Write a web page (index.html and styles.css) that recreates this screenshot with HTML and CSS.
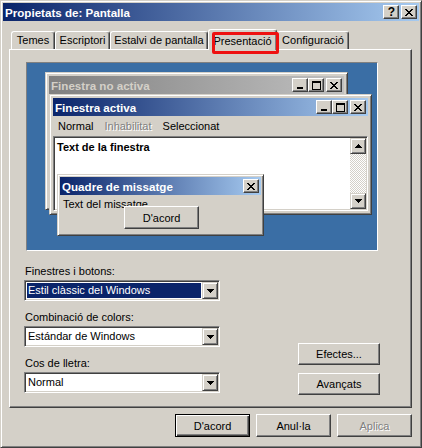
FILE: index.html
```
<!DOCTYPE html>
<html lang="ca">
<head>
<meta charset="utf-8">
<title>Propietats de: Pantalla</title>
<link rel="stylesheet" href="styles.css">
</head>
<body>
<div class="window">
  <div class="titlebar">
    <span class="title">Propietats de: Pantalla</span>
    <div class="caption-btns">
      <div class="cbtn help">?</div>
      <div class="cbtn">
        <svg width="8" height="7" viewBox="0 0 8 7"><path d="M0 0h2v1H0zM6 0h2v1H6zM1 1h2v1H1zM5 1h2v1H5zM2 2h4v1H2zM3 3h2v1H3zM2 4h4v1H2zM1 5h2v1H1zM5 5h2v1H5zM0 6h2v1H0zM6 6h2v1H6z" fill="#000"/></svg>
      </div>
    </div>
  </div>

  <div class="client">
    <div class="tabs">
      <div class="tab w-temes">Temes</div>
      <div class="tab w-escr">Escriptori</div>
      <div class="tab w-estalvi">Estalvi de pantalla</div>
      <div class="tab tab-sel w-pres">Presentació</div>
      <div class="tab w-conf">Configuració</div>
    </div>

    <div class="panel">
      <div class="preview">
        <div class="mwin win-inactive">
          <div class="mtitle inactive">
            <span>Finestra no activa</span>
            <div class="mcaps">
              <div class="cbtn"><svg width="8" height="7" viewBox="0 0 8 7"><path d="M1 5h6v2H1z" fill="#000"/></svg></div>
              <div class="cbtn"><svg width="9" height="9" viewBox="0 0 9 9"><path d="M0 0h9v9H0zM1 2v6h7V2z" fill="#000" fill-rule="evenodd"/></svg></div>
              <div class="cbtn gap"><svg width="8" height="7" viewBox="0 0 8 7"><path d="M0 0h2v1H0zM6 0h2v1H6zM1 1h2v1H1zM5 1h2v1H5zM2 2h4v1H2zM3 3h2v1H3zM2 4h4v1H2zM1 5h2v1H1zM5 5h2v1H5zM0 6h2v1H0zM6 6h2v1H6z" fill="#000"/></svg></div>
            </div>
          </div>
        </div>

        <div class="mwin win-active">
          <div class="mtitle active">
            <span>Finestra activa</span>
            <div class="mcaps">
              <div class="cbtn"><svg width="8" height="7" viewBox="0 0 8 7"><path d="M1 5h6v2H1z" fill="#000"/></svg></div>
              <div class="cbtn"><svg width="9" height="9" viewBox="0 0 9 9"><path d="M0 0h9v9H0zM1 2v6h7V2z" fill="#000" fill-rule="evenodd"/></svg></div>
              <div class="cbtn gap"><svg width="8" height="7" viewBox="0 0 8 7"><path d="M0 0h2v1H0zM6 0h2v1H6zM1 1h2v1H1zM5 1h2v1H5zM2 2h4v1H2zM3 3h2v1H3zM2 4h4v1H2zM1 5h2v1H1zM5 5h2v1H5zM0 6h2v1H0zM6 6h2v1H6z" fill="#000"/></svg></div>
            </div>
          </div>
          <div class="menu">
            <span class="mi">Normal</span>
            <span class="mi disabled">Inhabilitat</span>
            <span class="mi">Seleccionat</span>
          </div>
          <div class="textarea">
            <div class="ta-text">Text de la finestra</div>
            <div class="scrollbar">
              <div class="sbtn"><svg width="7" height="4" viewBox="0 0 7 4"><path d="M3 0h1v1H3zM2 1h3v1H2zM1 2h5v1H1zM0 3h7v1H0z" fill="#000"/></svg></div>
              <div class="track"></div>
              <div class="sbtn"><svg width="7" height="4" viewBox="0 0 7 4"><path d="M0 0h7v1H0zM1 1h5v1H1zM2 2h3v1H2zM3 3h1v1H3z" fill="#000"/></svg></div>
            </div>
          </div>
        </div>

        <div class="mwin msgbox">
          <div class="mtitle active">
            <span>Quadre de missatge</span>
            <div class="mcaps">
              <div class="cbtn"><svg width="8" height="7" viewBox="0 0 8 7"><path d="M0 0h2v1H0zM6 0h2v1H6zM1 1h2v1H1zM5 1h2v1H5zM2 2h4v1H2zM3 3h2v1H3zM2 4h4v1H2zM1 5h2v1H1zM5 5h2v1H5zM0 6h2v1H0zM6 6h2v1H6z" fill="#000"/></svg></div>
            </div>
          </div>
          <div class="msg-body">
            <div class="msg-text">Text del missatge</div>
            <div class="btn msg-btn">D'acord</div>
          </div>
        </div>
      </div>

      <div class="lower">
        <div class="fields">
          <div class="field">
            <div class="label">Finestres i botons:</div>
            <div class="combo">
              <div class="combo-val"><span class="hl">Estil clàssic del Windows</span></div>
              <div class="dd"><svg width="7" height="4" viewBox="0 0 7 4"><path d="M0 0h7v1H0zM1 1h5v1H1zM2 2h3v1H2zM3 3h1v1H3z" fill="#000"/></svg></div>
            </div>
          </div>
          <div class="field">
            <div class="label">Combinació de colors:</div>
            <div class="combo">
              <div class="combo-val"><span class="plain">Estándar de Windows</span></div>
              <div class="dd"><svg width="7" height="4" viewBox="0 0 7 4"><path d="M0 0h7v1H0zM1 1h5v1H1zM2 2h3v1H2zM3 3h1v1H3z" fill="#000"/></svg></div>
            </div>
          </div>
          <div class="field">
            <div class="label">Cos de lletra:</div>
            <div class="combo">
              <div class="combo-val"><span class="plain">Normal</span></div>
              <div class="dd"><svg width="7" height="4" viewBox="0 0 7 4"><path d="M0 0h7v1H0zM1 1h5v1H1zM2 2h3v1H2zM3 3h1v1H3z" fill="#000"/></svg></div>
            </div>
          </div>
        </div>
        <div class="side">
          <div class="btn side-btn">Efectes...</div>
          <div class="btn side-btn">Avançats</div>
        </div>
      </div>
    </div>

    <div class="dialog-btns">
      <div class="btn default">D'acord</div>
      <div class="btn">Anul·la</div>
      <div class="btn disabled">Aplica</div>
    </div>
  </div>

  <div class="redmark"></div>
</div>
</body>
</html>
```
FILE: styles.css
```
* { box-sizing: border-box; }

body {
  margin: 0;
  background: #d4d0c8;
  font-family: "Liberation Sans", Arial, sans-serif;
  font-size: 11px;
  color: #000;
}

.window {
  position: relative;
  width: 422px;
  height: 448px;
  background: #d4d0c8;
  border: 1px solid;
  border-color: #d4d0c8 #404040 #404040 #d4d0c8;
  box-shadow: inset 1px 1px #fff, inset -1px -1px #808080;
  padding: 2px;
}

.titlebar {
  height: 18px;
  display: flex;
  align-items: center;
  justify-content: space-between;
  background: linear-gradient(to right, #0a246a, #a6caf0);
  padding: 0 2px 0 2px;
  color: #fff;
  font-weight: bold;
  font-size: 11.6px;
}

.caption-btns, .mcaps {
  display: flex;
  align-items: center;
}

.caption-btns { gap: 2px; }

.cbtn {
  width: 16px;
  height: 14px;
  background: #d4d0c8;
  border: 1px solid;
  border-color: #fff #404040 #404040 #fff;
  box-shadow: inset -1px -1px #808080;
  display: flex;
  align-items: center;
  justify-content: center;
  color: #000;
}

.cbtn svg { display: block; }

.cbtn.help {
  font-size: 12px;
  font-weight: bold;
  line-height: 12px;
  padding-left: 1px;
}

.mcaps .cbtn.gap { margin-left: 2px; }

.client {
  padding: 0 7px 0 6px;
}

/* tabs */
.tabs {
  display: flex;
  align-items: flex-end;
  height: 20px;
  margin-top: 8px;
  padding-left: 2px;
  position: relative;
  z-index: 1;
}

.tab {
  height: 18px;
  background: #d4d0c8;
  border-top: 1px solid #fff;
  border-left: 1px solid #fff;
  border-right: 1px solid #404040;
  box-shadow: inset -1px 0 #808080;
  border-radius: 3px 3px 0 0;
  display: flex;
  align-items: center;
  justify-content: center;
  padding-bottom: 1px;
  white-space: nowrap;
}

.tab-sel {
  height: 21px;
  margin-bottom: -1px;
  padding-top: 2px;
  padding-bottom: 1px;
}

.w-temes { width: 44px; }
.w-escr { width: 55px; }
.w-estalvi { width: 98px; }
.w-pres { width: 69px; }
.w-conf { width: 72px; }

/* panel */
.panel {
  height: 359px;
  border: 1px solid;
  border-color: #fff #404040 #404040 #fff;
  box-shadow: inset -1px -1px #808080;
  padding-top: 12px;
  position: relative;
}

.preview {
  position: relative;
  margin-left: 16px;
  width: 352px;
  height: 189px;
  border: 1px solid;
  border-color: #808080 #fff #fff #808080;
  background: #3a6ea5;
}

.mwin {
  position: absolute;
  background: #d4d0c8;
  border: 1px solid;
  border-color: #d4d0c8 #404040 #404040 #d4d0c8;
  box-shadow: inset 1px 1px #fff, inset -1px -1px #808080;
  padding: 3px;
  display: flex;
  flex-direction: column;
}

.win-inactive { left: 18px; top: 9px; width: 303px; height: 138px; }
.win-active { left: 22px; top: 31px; width: 323px; height: 121px; }
.msgbox { left: 30px; top: 111px; width: 207px; height: 62px; padding: 2px; }

.mtitle {
  height: 18px;
  flex: none;
  display: flex;
  align-items: center;
  justify-content: space-between;
  padding: 0 2px;
  font-weight: bold;
  font-size: 11.6px;
}

.mtitle.active {
  background: linear-gradient(to right, #0a246a, #a6caf0);
  color: #fff;
}

.mtitle.inactive {
  background: linear-gradient(to right, #808080, #c0c0c0);
  color: #d4d0c8;
}

.menu {
  height: 20px;
  flex: none;
  display: flex;
  align-items: center;
  padding-left: 5px;
}

.mi { margin-right: 11px; }

.disabled {
  color: #808080;
  text-shadow: 1px 1px #fff;
}

.textarea {
  flex: 1;
  display: flex;
  background: #fff;
  border: 1px solid;
  border-color: #808080 #fff #fff #808080;
  box-shadow: inset 1px 1px #404040, inset -1px -1px #d4d0c8;
  padding: 1px;
}

.ta-text {
  flex: 1;
  font-weight: bold;
  padding: 3px 0 0 2px;
  line-height: 13px;
}

.scrollbar {
  width: 16px;
  display: flex;
  flex-direction: column;
}

.sbtn {
  width: 16px;
  height: 16px;
  background: #d4d0c8;
  border: 1px solid;
  border-color: #d4d0c8 #404040 #404040 #d4d0c8;
  box-shadow: inset 1px 1px #fff, inset -1px -1px #808080;
  display: flex;
  align-items: center;
  justify-content: center;
}

.sbtn svg { display: block; }

.track {
  flex: 1;
  background: repeating-conic-gradient(#fff 0 25%, #d4d0c8 0 50%) 0 0 / 2px 2px;
}

.msg-body {
  flex: 1;
  display: flex;
  flex-direction: column;
  align-items: flex-start;
}

.msg-text {
  padding: 3px 0 0 3px;
  line-height: 13px;
  height: 16px;
}

.msg-btn {
  width: 72px;
  height: 23px;
  margin-top: -5px;
  margin-left: 64px;
}

/* buttons */
.btn {
  width: 75px;
  height: 23px;
  background: #d4d0c8;
  border: 1px solid;
  border-color: #fff #404040 #404040 #fff;
  box-shadow: inset -1px -1px #808080;
  display: flex;
  align-items: center;
  justify-content: center;
  white-space: nowrap;
}

.btn.default {
  border-color: #000;
  box-shadow: inset 1px 1px #fff, inset -1px -1px #404040, inset -2px -2px #808080;
}

/* lower part */
.lower {
  display: flex;
  justify-content: space-between;
  align-items: flex-end;
  margin: 14px 31px 0 14px;
}

.fields {
  width: 196px;
  display: flex;
  flex-direction: column;
  gap: 10px;
}

.label {
  line-height: 13px;
  margin-bottom: 2px;
  padding-left: 1px;
}

.combo {
  height: 21px;
  display: flex;
  background: #fff;
  border: 1px solid;
  border-color: #808080 #fff #fff #808080;
  box-shadow: inset 1px 1px #404040, inset -1px -1px #d4d0c8;
  padding: 1px;
}

.combo-val {
  flex: 1;
  display: flex;
  padding: 1px 1px 1px 1px;
}

.combo-val .hl {
  flex: 1;
  background: #0a246a;
  color: #fff;
  padding-left: 1px;
  line-height: 15px;
}

.combo-val .plain {
  padding-left: 1px;
  line-height: 15px;
}

.dd {
  width: 16px;
  height: 17px;
  background: #d4d0c8;
  border: 1px solid;
  border-color: #d4d0c8 #404040 #404040 #d4d0c8;
  box-shadow: inset 1px 1px #fff, inset -1px -1px #808080;
  display: flex;
  align-items: center;
  justify-content: center;
}

.dd svg { display: block; }

.side {
  display: flex;
  flex-direction: column;
  gap: 8px;
  margin-bottom: -2px;
}

.side-btn {
  width: 82px;
  height: 22px;
}

.dialog-btns {
  display: flex;
  justify-content: flex-end;
  gap: 6px;
  margin-top: 6px;
}

.redmark {
  position: absolute;
  z-index: 2;
  left: 211px;
  top: 31px;
  width: 67px;
  height: 22px;
  border: 3px solid #ee1111;
  border-radius: 2px;
}
```
